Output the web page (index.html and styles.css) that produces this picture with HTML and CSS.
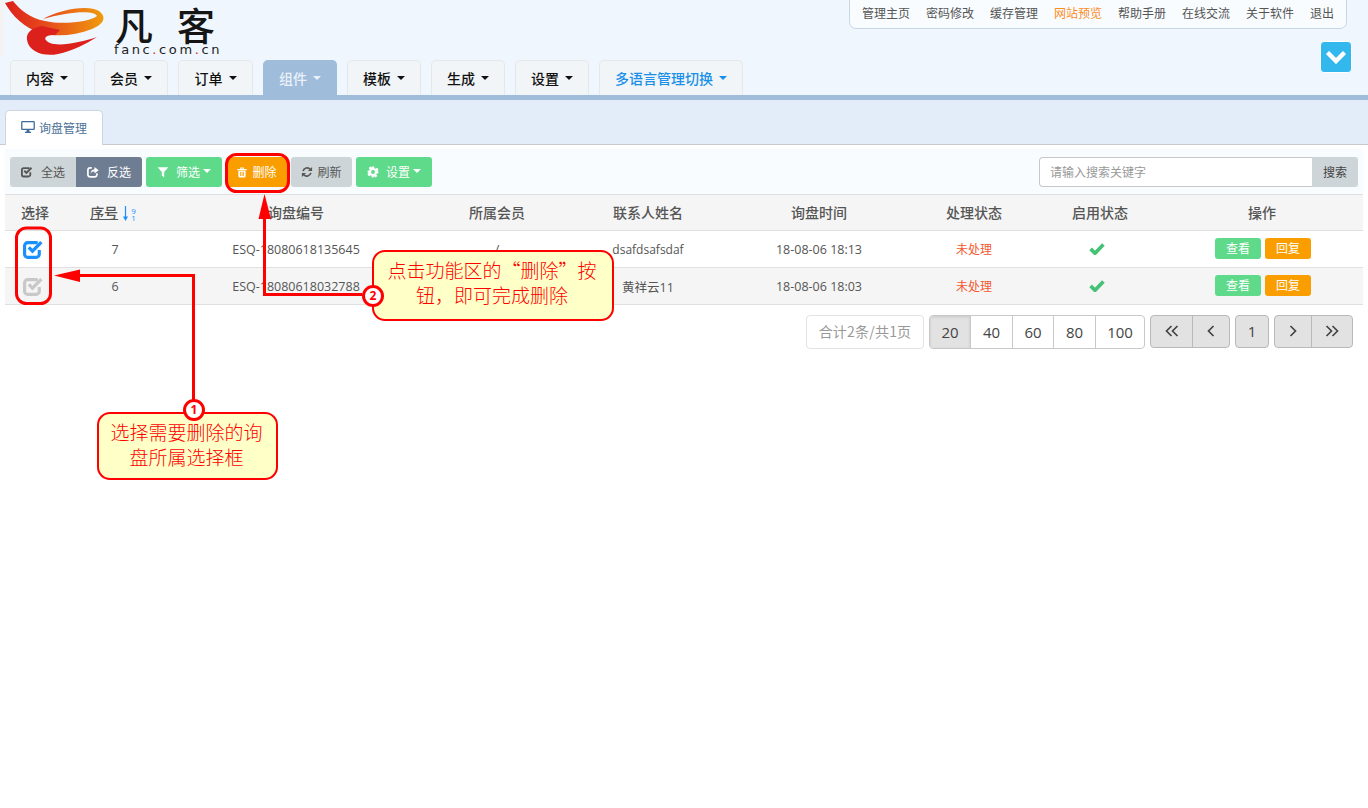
FILE: index.html
```html
<!DOCTYPE html>
<html lang="zh-CN">
<head>
<meta charset="utf-8">
<title>询盘管理</title>
<link rel="stylesheet" href="styles.css">
</head>
<body>
<svg width="0" height="0" class="defs" aria-hidden="true">
  <defs>
    <symbol id="i-check" viewBox="0 0 20 20"><path d="M15.500 10.500v4a3 3 0 0 1-3 3h-8a3 3 0 0 1-3-3v-8a3 3 0 0 1 3-3h8c.6 0 1 .1 1.500.3" fill="none" stroke="currentColor" stroke-width="3"/><path d="M5.500 8l3.500 3.500 8.500-8.500" fill="none" stroke="currentColor" stroke-width="3.200"/></symbol>
    <symbol id="i-share" viewBox="0 0 20 20"><path d="M8 3H5a3.500 3.500 0 0 0-3.500 3.500v8A3.500 3.500 0 0 0 5 18h8a3.500 3.500 0 0 0 3.500-3.500V12" fill="none" stroke="currentColor" stroke-width="2.800"/><path d="M12.500 1.500l7 5.500-7 5.500V9.300c-3.500 0-5.500 1-6.500 3.700 0-4.500 2.500-7.300 6.500-7.600z" fill="currentColor"/></symbol>
    <symbol id="i-filter" viewBox="0 0 20 20"><path d="M1 2h18l-7 8v9l-4-3v-6z" fill="currentColor"/></symbol>
    <symbol id="i-trash" viewBox="0 0 20 20"><path d="M2 5h16v2H2zM7 2.500h6V5h-1.800V4H8.800v1H7zM4 8h12v9a2 2 0 0 1-2 2H6a2 2 0 0 1-2-2zm3 1.500v7h1.300v-7zm2.400 0v7h1.300v-7zm2.400 0v7h1.300v-7z" fill="currentColor" fill-rule="evenodd"/></symbol>
    <symbol id="i-refresh" viewBox="0 0 20 20"><path d="M3.500 8.500A7 7 0 0 1 15.500 5.500M16.500 11.500A7 7 0 0 1 4.500 14.500" fill="none" stroke="currentColor" stroke-width="2.800"/><path d="M18.500 1.500v7h-7zM1.500 18.500v-7h7z" fill="currentColor"/></symbol>
    <symbol id="i-cog" viewBox="0 0 20 20"><path d="M8 1h4l.5 2.700 1.700.7 2.300-1.500 2.700 2.700-1.500 2.300.7 1.700L19 8v4l-2.700.5-.7 1.700 1.500 2.300-2.700 2.700-2.300-1.500-1.700.7L12 19H8l-.5-2.700-1.700-.7-2.300 1.500L.8 14.400l1.500-2.300-.7-1.700L1 12V8l2.700-.5.7-1.700L2.900 3.500 5.600.8l2.300 1.500zM10 6.800a3.200 3.200 0 1 0 0 6.400 3.200 3.200 0 0 0 0-6.400z" fill="currentColor" fill-rule="evenodd"/></symbol>
    <symbol id="i-ok" viewBox="0 0 20 16"><path d="M2 8.500l5.500 5.500L18 3" fill="none" stroke="currentColor" stroke-width="4.600"/></symbol>
    <symbol id="i-desktop" viewBox="0 0 16 14"><path d="M0 1.500A1.500 1.500 0 0 1 1.500 0h13A1.500 1.500 0 0 1 16 1.500V9a1.500 1.500 0 0 1-1.500 1.500h-13A1.500 1.500 0 0 1 0 9zM1.500 1.500V9h13V1.500zM6.500 10.500h3l.4 2H11.500V14h-7v-1.500h1.600z" fill="currentColor" fill-rule="evenodd"/></symbol>
  </defs>
</svg>

<header class="header">
  <div class="header-left">
    <div class="logo">
      <svg class="logo-mark" viewBox="0 0 104 55" width="104" height="55">
        <defs>
          <linearGradient id="swoosh" x1="0" y1="0" x2="1" y2="0">
            <stop offset="0" stop-color="#dc1f1c"/>
            <stop offset=".45" stop-color="#e6501c"/>
            <stop offset="1" stop-color="#f09a0c"/>
          </linearGradient>
        </defs>
        <rect width="4" height="55" fill="#f3f3f3"/>
        <path d="M5 3L13 1C20 10 30 18 45 21 62 25 90 22 97 16 95 10 70 11 43 19 58 10 88 4 99 11 107 17 104 24 92 29 75 36 55 37 40 33 25 28 12 16 5 3z" fill="url(#swoosh)"/>
        <path d="M42 26C31 28 26 33 27 40 29 52 44 57 58 54 72 51 88 43 97 37 82 42 60 47 50 43 43 40 43 35 55 35L60 30z" fill="#dc211c"/>
      </svg>
      <div class="logo-text">
        <div class="logo-cn">凡客</div>
        <div class="logo-en">fanc<span class="logo-dot">.</span>com<span class="logo-dot">.</span>cn</div>
      </div>
    </div>
    <nav class="main-tabs">
      <a class="main-tab">内容 <i class="caret"></i></a>
      <a class="main-tab">会员 <i class="caret"></i></a>
      <a class="main-tab wide">订单 <i class="caret"></i></a>
      <a class="main-tab active">组件 <i class="caret"></i></a>
      <a class="main-tab">模板 <i class="caret"></i></a>
      <a class="main-tab">生成 <i class="caret"></i></a>
      <a class="main-tab">设置 <i class="caret"></i></a>
      <a class="main-tab lang">多语言管理切换 <i class="caret"></i></a>
    </nav>
  </div>
  <div class="header-right">
    <div class="top-nav">
      <a>管理主页</a><a>密码修改</a><a>缓存管理</a><a class="hot">网站预览</a><a>帮助手册</a><a>在线交流</a><a>关于软件</a><a>退出</a>
    </div>
    <button class="collapse" type="button" aria-label="展开">
      <svg width="22" height="14" viewBox="0 0 22 14"><path d="M2.500 2.500L11 11l8.500-8.500" fill="none" stroke="#fff" stroke-width="4.500"/></svg>
    </button>
  </div>
</header>

<div class="tab-band">
  <div class="page-tab"><svg class="ico-desktop"><use href="#i-desktop"/></svg>询盘管理</div>
</div>

<main class="main">
  <div class="toolbar">
    <div class="tools">
      <div class="btn-group">
        <button class="btn btn-grey wide-btn" type="button"><svg class="ico"><use href="#i-check"/></svg>全选</button>
        <button class="btn btn-slate wide-btn" type="button"><svg class="ico"><use href="#i-share"/></svg>反选</button>
      </div>
      <button class="btn btn-green drop-btn" type="button"><svg class="ico ico-mid"><use href="#i-filter"/></svg>筛选<i class="caret small"></i></button>
      <button class="btn btn-orange del-btn" type="button"><svg class="ico ico-tight"><use href="#i-trash"/></svg>删除</button>
      <button class="btn btn-grey ref-btn" type="button"><svg class="ico ico-tight"><use href="#i-refresh"/></svg>刷新</button>
      <button class="btn btn-green drop-btn" type="button"><svg class="ico ico-mid"><use href="#i-cog"/></svg>设置<i class="caret small"></i></button>
    </div>
    <div class="search">
      <input class="search-input" type="text" placeholder="请输入搜索关键字">
      <button class="search-btn" type="button">搜索</button>
    </div>
  </div>

  <table class="grid">
    <thead>
      <tr>
        <th class="c1">选择</th>
        <th class="c2"><span class="sort-label">序号</span> <span class="sort-ico"><svg width="5" height="15" viewBox="0 0 5 15"><path d="M2.500 0v12" stroke="#1a90ff" stroke-width="1.200"/><path d="M0 10.500L2.500 15 5 10.500z" fill="#1a90ff"/></svg><span class="sort-num">9<br>1</span></span></th>
        <th class="c3">询盘编号</th>
        <th class="c4">所属会员</th>
        <th class="c5">联系人姓名</th>
        <th class="c6">询盘时间</th>
        <th class="c7">处理状态</th>
        <th class="c8">启用状态</th>
        <th class="c9">操作</th>
      </tr>
    </thead>
    <tbody>
      <tr>
        <td class="cell-box"><svg class="ico-box on"><use href="#i-check"/></svg></td>
        <td>7</td>
        <td>ESQ-18080618135645</td>
        <td>/</td>
        <td class="latin-name">dsafdsafsdaf</td>
        <td>18-08-06 18:13</td>
        <td class="status">未处理</td>
        <td class="cell-ok"><svg class="ico-ok"><use href="#i-ok"/></svg></td>
        <td class="cell-ops"><button class="mini mini-green" type="button">查看</button><button class="mini mini-orange" type="button">回复</button></td>
      </tr>
      <tr class="alt">
        <td class="cell-box"><svg class="ico-box"><use href="#i-check"/></svg></td>
        <td>6</td>
        <td>ESQ-18080618032788</td>
        <td>/</td>
        <td>黄祥云11</td>
        <td>18-08-06 18:03</td>
        <td class="status">未处理</td>
        <td class="cell-ok"><svg class="ico-ok"><use href="#i-ok"/></svg></td>
        <td class="cell-ops"><button class="mini mini-green" type="button">查看</button><button class="mini mini-orange" type="button">回复</button></td>
      </tr>
    </tbody>
  </table>

  <div class="pager">
    <span class="pg-total">合计2条/共1页</span>
    <div class="pg-group">
      <a class="pg pg-on w41">20</a><a class="pg w42">40</a><a class="pg w41">60</a><a class="pg w42">80</a><a class="pg w48">100</a>
    </div>
    <div class="pg-group nav">
      <a class="pg pg-nav w42"><svg width="14" height="12" viewBox="0 0 14 12"><path d="M6.500 1L1.500 6l5 5M12.500 1l-5 5 5 5" fill="none" stroke="#444" stroke-width="1.700"/></svg></a><a class="pg pg-nav w36"><svg width="8" height="12" viewBox="0 0 8 12"><path d="M6.500 1l-5 5 5 5" fill="none" stroke="#444" stroke-width="1.700"/></svg></a>
    </div>
    <div class="pg-group nav">
      <a class="pg pg-nav w32">1</a>
    </div>
    <div class="pg-group nav">
      <a class="pg pg-nav w37"><svg width="8" height="12" viewBox="0 0 8 12"><path d="M1.500 1l5 5-5 5" fill="none" stroke="#444" stroke-width="1.700"/></svg></a><a class="pg pg-nav w40"><svg width="14" height="12" viewBox="0 0 14 12"><path d="M1.500 1l5 5-5 5M7.500 1l5 5-5 5" fill="none" stroke="#444" stroke-width="1.700"/></svg></a>
    </div>
  </div>
</main>

<div class="notes">
  <svg class="notes-art" width="1368" height="808" viewBox="0 0 1368 808">
    <rect x="226.500" y="154.500" width="62" height="37" rx="10" fill="none" stroke="#f00" stroke-width="3"/>
    <rect x="16.500" y="228" width="34" height="75.500" rx="10" fill="none" stroke="#f00" stroke-width="3"/>
    <path d="M193.500 402V275.500H72" fill="none" stroke="#f00" stroke-width="3"/>
    <path d="M54 275.500L80 269.500V282z" fill="#f00"/>
    <path d="M362 294.500H264.500V212" fill="none" stroke="#f00" stroke-width="3"/>
    <path d="M264.500 194L258.500 219H271z" fill="#f00"/>
  </svg>
  <div class="callout callout-a">选择需要删除的询<br>盘所属选择框<span class="num num-a">1</span></div>
  <div class="callout callout-b">点击功能区的“删除”按<br>钮，即可完成删除<span class="num num-b">2</span></div>
</div>
</body>
</html>
```

FILE: styles.css
```css
* { box-sizing: border-box; }
html, body { margin: 0; padding: 0; background: #fff; }
body {
  position: relative;
  min-height: 808px;
  overflow: hidden;
  font-family: "Open Sans", "Noto Sans CJK SC", sans-serif;
  font-size: 12.500px;
  color: #555;
}
.defs { position: absolute; }
a { cursor: pointer; }
button { font-family: inherit; cursor: pointer; }

/* header */
.header {
  display: flex;
  justify-content: space-between;
  height: 100px;
  background: #eff6fd;
  border-bottom: 5px solid #9fbcdb;
}
.header-left { display: flex; flex-direction: column; }
.logo { display: flex; height: 60px; align-items: flex-start; }
.logo-text { margin-left: 10px; width: 128px; }
.logo-cn {
  height: 44px;
  padding-top: 3px;
  padding-left: 1px;
  font-family: "Noto Sans CJK SC", sans-serif;
  font-size: 38px;
  line-height: 41px;
  font-weight: 500;
  letter-spacing: 24px;
  color: #151515;
  white-space: nowrap;
}
.logo-en {
  font-family: "DejaVu Sans", sans-serif;
  font-size: 13px;
  line-height: 12px;
  letter-spacing: 2.600px;
  color: #222;
  white-space: nowrap;
}
.logo-dot { color: #d8261c; }

.main-tabs { display: flex; gap: 10px; padding-left: 10px; }
.main-tab {
  display: flex;
  align-items: center;
  justify-content: center;
  gap: 6px;
  width: 74px;
  height: 35px;
  border: 1px solid #e4e8ea;
  border-bottom: 0;
  border-radius: 5px 5px 0 0;
  background: #f1f5f7;
  font-family: "Noto Sans CJK SC", sans-serif;
  font-size: 14px;
  font-weight: 500;
  color: #111;
}
.main-tab.wide { width: 75px; }
.main-tab.active { background: #9fbcdb; border-color: #9fbcdb; color: #eaf1f8; }
.main-tab.lang { width: 144px; color: #1a90e8; }
.caret {
  display: inline-block;
  width: 0;
  height: 0;
  border-left: 4px solid transparent;
  border-right: 4px solid transparent;
  border-top: 4px solid currentColor;
}
.caret.small { margin-left: 3px; }

.header-right {
  display: flex;
  flex-direction: column;
  align-items: flex-end;
  padding-right: 16px;
}
.top-nav {
  display: flex;
  gap: 16px;
  width: 498px;
  height: 30px;
  margin-top: -1px;
  margin-right: 5px;
  padding: 5px 12px 0;
  background: #f9fcff;
  border: 1px solid #c9d6e6;
  border-radius: 0 0 7px 7px;
  font-family: "Noto Sans CJK SC", sans-serif;
  font-size: 12px;
  line-height: 16px;
  color: #555;
  white-space: nowrap;
}
.top-nav .hot { color: #fb8c1e; }
.collapse {
  display: flex;
  align-items: center;
  justify-content: center;
  width: 32px;
  height: 32px;
  margin-top: 12px;
  padding: 0;
  background: #33b8ee;
  border: 1px solid #fff;
  border-radius: 4px;
}

/* page tab */
.tab-band {
  height: 45px;
  padding: 10px 0 0 5px;
  background: #e3edf9;
  border-bottom: 1px solid #c8c9cc;
}
.page-tab {
  display: flex;
  align-items: center;
  width: 98px;
  height: 35px;
  padding: 0 0 2px 15px;
  background: #fff;
  border: 1px solid #cdd5de;
  border-bottom: 0;
  border-radius: 5px 5px 0 0;
  font-family: "Noto Sans CJK SC", sans-serif;
  font-size: 12px;
  color: #4d7198;
}
.ico-desktop { width: 14px; height: 12px; margin-right: 4px; color: #3f6a99; }

/* toolbar */
.main { margin: 4px 5px 0; }
.toolbar {
  display: flex;
  justify-content: space-between;
  height: 45px;
  padding: 8px 5px 7px;
  background: #f8fcff;
}
.tools { display: flex; gap: 4px; }
.btn-group { display: flex; }
.btn {
  display: flex;
  align-items: center;
  justify-content: center;
  height: 30px;
  padding: 0 0 2px;
  border: 0;
  border-radius: 3px;
  font-family: "Noto Sans CJK SC", sans-serif;
  font-size: 12px;
}
.btn-group .btn:first-child { border-radius: 3px 0 0 3px; }
.btn-group .btn:last-child { border-radius: 0 3px 3px 0; }
.wide-btn { width: 66px; }
.drop-btn { width: 76px; }
.del-btn { width: 61px; }
.ref-btn { width: 61px; }
.btn-grey { background: #ced5d8; color: #555; }
.btn-slate { background: #6f7d93; color: #fff; }
.btn-green { background: #5fd98a; color: #fff; }
.btn-orange { background: #fa9e00; color: #fff; }
.ico { width: 12px; height: 12px; margin-right: 8px; margin-top: 2px; }
.ico-mid { margin-right: 7px; }
.ico-tight { margin-right: 4px; }

.search { display: flex; width: 319px; }
.search-input {
  flex: 1;
  min-width: 0;
  height: 30px;
  padding: 0 10px 2px;
  background: #fff;
  border: 1px solid #c8c8c8;
  border-right: 0;
  border-radius: 4px 0 0 4px;
  font-family: "Noto Sans CJK SC", sans-serif;
  font-size: 12px;
  outline: none;
}
.search-input::placeholder { color: #999; opacity: 1; }
.search-btn {
  width: 46px;
  height: 30px;
  padding: 0 0 2px;
  background: #ced5d8;
  border: 0;
  border-radius: 0 3px 3px 0;
  font-family: "Noto Sans CJK SC", sans-serif;
  font-size: 12px;
  color: #444;
}

/* table */
.grid {
  width: 1358px;
  table-layout: fixed;
  border-collapse: separate;
  border-spacing: 0;
  border-top: 1px solid #e0e0e0;
}
.grid th, .grid td {
  padding: 0;
  text-align: center;
  border-bottom: 1px solid #e0e0e0;
  vertical-align: middle;
}
.grid th {
  height: 36px;
  padding-bottom: 2px;
  background: #f5f5f5;
  font-family: "Noto Sans CJK SC", sans-serif;
  font-size: 14px;
  font-weight: 500;
  color: #555;
}
.grid th.c2 { padding-right: 4px; }
.grid td { height: 37px; color: #555; font-size: 12.500px; }
.grid td.latin-name { font-size: 12px; }
.grid .alt td { background: #f5f5f5; }
.c1 { width: 60px; }
.c2 { width: 100px; }
.c3 { width: 262px; }
.c4 { width: 140px; }
.c5 { width: 162px; }
.c6 { width: 180px; }
.c7 { width: 130px; }
.c8 { width: 122px; }
.c9 { width: 202px; }
.sort-label { text-decoration: underline; }
.sort-ico { display: inline-flex; align-items: center; gap: 3px; margin-left: 2px; vertical-align: middle; }
.sort-num { font-family: "Open Sans", sans-serif; font-size: 8px; line-height: 7px; color: #1a90ff; font-weight: 400; }
.grid td.status { padding-bottom: 2px; color: #f4572e; font-size: 12px; font-family: "Noto Sans CJK SC", sans-serif; }
.grid td.cell-box { padding-right: 4px; }
.ico-box { display: block; width: 21px; height: 21px; margin: 0 auto; color: #c8c8c8; }
.ico-box.on { color: #1a90ff; }
.grid td.cell-ok { padding: 0 6px 2px 0; }
.ico-ok { display: block; width: 16px; height: 13px; margin: 0 auto; color: #46c277; }
.grid td.cell-ops { padding: 0 0 2px 2px; }
.mini {
  height: 21px;
  width: 46px;
  padding: 0 0 2px;
  margin: 0 2px;
  border: 0;
  border-radius: 3px;
  font-family: "Noto Sans CJK SC", sans-serif;
  font-size: 12px;
  color: #fff;
  vertical-align: middle;
}
.mini-green { background: #5fd98a; }
.mini-orange { background: #fa9e00; }

/* pager */
.pager {
  display: flex;
  justify-content: flex-end;
  gap: 5px;
  margin-top: 10px;
  padding-right: 10px;
}
.pg-total {
  display: flex;
  align-items: center;
  justify-content: center;
  width: 118px;
  height: 34px;
  padding-bottom: 2px;
  background: #fff;
  border: 1px solid #e3e3e3;
  border-radius: 4px;
  font-family: "Noto Sans CJK SC", sans-serif;
  font-size: 14px;
  letter-spacing: .2px;
  color: #999;
}
.pg-group { display: flex; height: 34px; border: 1px solid #c8c8c8; border-radius: 4px; overflow: hidden; background: #fff; }
.pg-group.nav { height: 33px; border-color: #b9b9b9; background: #e2e2e2; }
.pg {
  display: flex;
  align-items: center;
  justify-content: center;
  padding-bottom: 1px;
  font-size: 15px;
  color: #444;
  border-right: 1px solid #c8c8c8;
}
.pg:last-child { border-right: 0; }
.pg-on { background: #e2e2e2; box-shadow: inset 0 1px 3px rgba(0,0,0,.12); }
.pg-nav { border-right-color: #b9b9b9; }
.w32 { width: 32px; }
.w36 { width: 36px; }
.w37 { width: 37px; }
.w40 { width: 40px; }
.w41 { width: 41px; }
.w42 { width: 42px; }
.w48 { width: 48px; }

/* annotations laid over the page */
.notes { position: absolute; left: 0; top: 0; width: 1368px; height: 808px; pointer-events: none; }
.notes-art { position: absolute; left: 0; top: 0; }
.callout {
  position: absolute;
  background: #ffffc8;
  border: 2px solid #f00;
  border-radius: 13px;
  padding-top: 5px;
  font-family: "Noto Sans CJK SC", sans-serif;
  font-size: 19px;
  font-weight: 300;
  line-height: 25px;
  text-align: center;
  color: #f00;
  white-space: nowrap;
}
.callout-a { left: 97px; top: 412px; width: 181px; height: 68px; padding-right: 2px; }
.callout-b { left: 372px; top: 250px; width: 242px; height: 71px; padding-right: 2px; }
.num {
  position: absolute;
  display: flex;
  align-items: center;
  justify-content: center;
  width: 22px;
  height: 22px;
  background: #fff;
  border: 3px solid #f00;
  border-radius: 50%;
  font-family: "Open Sans", sans-serif;
  font-size: 12px;
  font-weight: 700;
  line-height: 1;
  color: #f00;
}
.num-a { left: 84px; top: -15px; }
.num-b { left: -12px; top: 33px; }
```
